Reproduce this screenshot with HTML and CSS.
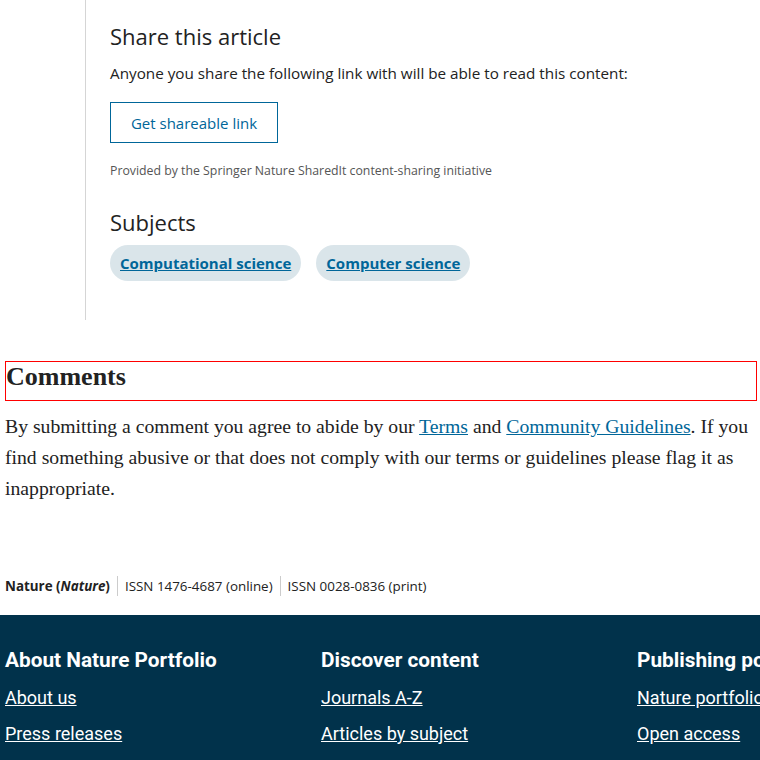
FILE: index.html
```html
<!DOCTYPE html>
<html lang="en">
<head>
<meta charset="utf-8">
<title>Nature article</title>
<link rel="stylesheet" href="styles.css">
</head>
<body>
<div class="page">
  <section class="aside">
    <h2 class="aside-title">Share this article</h2>
    <p class="share-text">Anyone you share the following link with will be able to read this content:</p>
    <button class="share-btn" type="button">Get shareable link</button>
    <p class="provided">Provided by the Springer Nature SharedIt content-sharing initiative</p>
    <h2 class="aside-title subjects-title">Subjects</h2>
    <ul class="pills">
      <li><a class="pill" href="#">Computational science</a></li>
      <li><a class="pill" href="#">Computer science</a></li>
    </ul>
  </section>

  <section class="comments">
    <h2 class="comments-title">Comments</h2>
    <p class="comments-text">By submitting a comment you agree to abide by our <a href="#">Terms</a> and <a href="#">Community Guidelines</a>. If you find something abusive or that does not comply with our terms or guidelines please flag it as inappropriate.</p>
  </section>

  <p class="issn"><span class="issn-item"><b>Nature (<i>Nature</i>)</b></span><span class="issn-item">ISSN 1476-4687 (online)</span><span class="issn-item">ISSN 0028-0836 (print)</span></p>
</div>

<footer class="footer">
  <div class="footer-col">
    <h3 class="footer-title">About Nature Portfolio</h3>
    <a href="#">About us</a>
    <a href="#">Press releases</a>
  </div>
  <div class="footer-col">
    <h3 class="footer-title">Discover content</h3>
    <a href="#">Journals A-Z</a>
    <a href="#">Articles by subject</a>
  </div>
  <div class="footer-col">
    <h3 class="footer-title">Publishing policies</h3>
    <a href="#">Nature portfolio policies</a>
    <a href="#">Open access</a>
  </div>
</footer>
</body>
</html>
```

FILE: styles.css
```css
html, body {
  margin: 0;
  padding: 0;
  background: #fff;
  overflow: hidden;
}
body {
  font-family: "Open Sans", "Noto Sans", sans-serif;
  color: #222;
}
.page {
  padding-left: 5px;
  width: 752px;
}
.aside {
  margin-left: 80px;
  border-left: 1px solid #d5d5d5;
  padding: 20px 0 39px 24px;
}
.aside-title {
  font-weight: 400;
  font-size: 22px;
  line-height: 32px;
  margin: 0;
  color: #222;
}
.share-text {
  font-size: 15.25px;
  line-height: 24px;
  margin: 9px 0 0;
}
.share-btn {
  display: block;
  margin-top: 17px;
  font-family: inherit;
  font-size: 15px;
  color: #006699;
  background: #fff;
  border: 1px solid #006699;
  width: 168px;
  height: 41px;
  padding: 0;
  cursor: pointer;
}
.provided {
  font-size: 12.3px;
  line-height: 18px;
  color: #555;
  margin: 19px 0 0;
}
.subjects-title {
  margin-top: 26px;
}
.pills {
  list-style: none;
  margin: 7px 0 0;
  padding: 0;
  display: flex;
  gap: 15px;
}
.pill {
  display: block;
  background: #dae5ea;
  border-radius: 18px;
  height: 36px;
  line-height: 36px;
  padding: 0 10px;
  font-size: 15px;
  font-weight: 700;
  color: #006699;
  text-decoration: underline;
}
.comments {
  margin-top: 41px;
}
.comments-title {
  font-family: "Liberation Serif", serif;
  font-weight: 700;
  font-size: 26px;
  line-height: 30px;
  padding: 0 0 8px;
  margin: 0;
  border: 1px solid #ff0000;
  color: #222;
}
.comments-text {
  font-family: "Liberation Serif", serif;
  font-size: 19.7px;
  line-height: 31px;
  margin: 10px 0 0;
  color: #222;
}
.comments-text a {
  color: #006699;
}
.issn {
  margin: 72px 0 0;
  font-size: 13.4px;
  line-height: 20px;
  color: #222;
  display: flex;
}
.issn-item {
  padding: 0 7px;
  border-left: 1px solid #ccc;
}
.issn-item:first-child {
  padding-left: 0;
  border-left: 0;
}
.footer {
  margin-top: 19px;
  background: #01324b;
  color: #fff;
  display: grid;
  grid-template-columns: 316px 316px 316px;
  padding: 32px 0 20px 5px;
  height: 200px;
}
.footer-col {
  display: flex;
  flex-direction: column;
  align-items: flex-start;
}
.footer-title {
  font-family: Roboto, "Open Sans", sans-serif;
  font-size: 20.8px;
  font-weight: 700;
  line-height: 26px;
  margin: 0 0 7px;
  white-space: nowrap;
}
.footer-col a {
  font-family: Roboto, "Open Sans", sans-serif;
  color: #fff;
  font-size: 18px;
  line-height: 36px;
  white-space: nowrap;
}
```
